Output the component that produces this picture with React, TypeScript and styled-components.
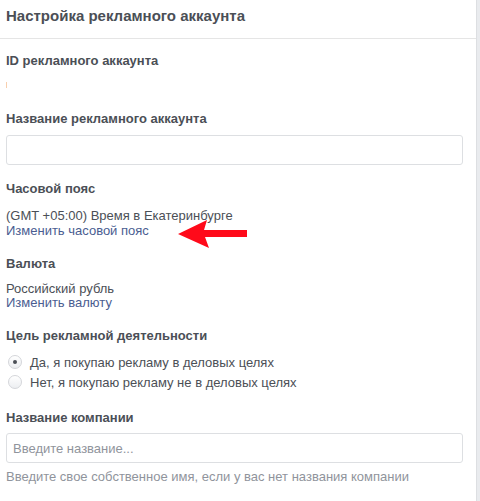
import React from "react";
import styled, { createGlobalStyle } from "styled-components";

const Global = createGlobalStyle`
  html, body { margin: 0; padding: 0; background: #e9ebee; }
  body { font-family: "Liberation Sans", Arial, sans-serif; }
`;

const Page = styled.div`
  display: flex;
  width: 480px;
  height: 501px;
  background: #e9ebee;
`;

const Panel = styled.div`
  width: 477px;
  height: 501px;
  background: #fff;
  border-right: 1px solid #dddfe2;
  box-sizing: border-box;
  display: flex;
  flex-direction: column;
  overflow: hidden;
`;

const Header = styled.div`
  height: 39px;
  box-sizing: border-box;
  border-bottom: 1px solid #e5e5e5;
  padding: 7px 6px 0;
  font-size: 15px;
  line-height: 17px;
  font-weight: bold;
  color: #4b4f56;
`;

const Body = styled.div`
  padding: 0 13px 0 6px;
  display: flex;
  flex-direction: column;
`;

const Section = styled.div<{ $top: number }>`
  margin-top: ${(p) => p.$top}px;
  display: flex;
  flex-direction: column;
`;

const Label = styled.div`
  font-size: 13px;
  font-weight: bold;
  color: #4b4f56;
  line-height: 16px;
`;

const Text = styled.div<{ $top?: number; $lh?: number }>`
  font-size: 13px;
  color: #4b4f56;
  line-height: ${(p) => p.$lh ?? 15}px;
  margin-top: ${(p) => p.$top ?? 0}px;
`;

const LinkRow = styled.div`
  position: relative;
  display: flex;
  align-items: center;
`;

const Link = styled.a<{ $lh?: number }>`
  font-size: 13px;
  color: #4a5d91;
  line-height: ${(p) => p.$lh ?? 15}px;
  text-decoration: none;
`;

const Input = styled.input<{ $top?: number }>`
  margin-top: ${(p) => p.$top ?? 8}px;
  height: 30px;
  box-sizing: border-box;
  border: 1px solid #dddfe2;
  border-radius: 3px;
  padding: 0 6px;
  font-family: "Liberation Sans", Arial, sans-serif;
  font-size: 13px;
  color: #1d2129;
  outline: none;
  &::placeholder { color: #90949c; }
`;

const Help = styled.div`
  font-size: 13px;
  color: #90949c;
  margin-top: 6px;
  line-height: 15px;
`;

const Mark = styled.div`
  width: 1px;
  height: 6px;
  background: #f8cfae;
  margin-top: 13px;
`;

const RadioRow = styled.label`
  display: flex;
  align-items: center;
  gap: 9px;
  height: 20px;
  font-size: 13px;
  color: #4b4f56;
  padding-left: 2px;
`;

const RadioCircle = styled.span<{ $checked?: boolean }>`
  width: 14px;
  height: 14px;
  margin-right: -1px;
  border-radius: 50%;
  border: 1px solid #d4d6da;
  background: linear-gradient(#fff, #eceef1);
  box-sizing: border-box;
  display: flex;
  align-items: center;
  justify-content: center;
  &::after {
    content: "";
    width: 4px;
    height: 4px;
    border-radius: 50%;
    background: ${(p) => (p.$checked ? "#4b4f56" : "transparent")};
  }
`;

const Arrow = styled.svg`
  position: absolute;
  left: 172px;
  top: -7px;
`;

export default function App() {
  return (
    <>
      <Global />
      <Page>
        <Panel>
          <Header>Настройка рекламного аккаунта</Header>
          <Body>
            <Section $top={14}>
              <Label>ID рекламного аккаунта</Label>
              <Mark />
            </Section>
            <Section $top={23}>
              <Label>Название рекламного аккаунта</Label>
              <Input />
            </Section>
            <Section $top={16}>
              <Label>Часовой пояс</Label>
              <Text $top={11}>(GMT +05:00) Время в Екатеринбурге</Text>
              <LinkRow>
                <Link>Изменить часовой пояс</Link>
                <Arrow width="72" height="36" viewBox="0 0 72 36">
                  <polygon points="0,18 29,4 26,14 69,14 69,21 27,21 31,32" fill="#ff0a1a" />
                </Arrow>
              </LinkRow>
            </Section>
            <Section $top={18}>
              <Label>Валюта</Label>
              <Text $top={10} $lh={14}>Российский рубль</Text>
              <Link $lh={14}>Изменить валюту</Link>
            </Section>
            <Section $top={18}>
              <Label>Цель рекламной деятельности</Label>
              <Section $top={8}>
                <RadioRow>
                  <RadioCircle $checked />
                  Да, я покупаю рекламу в деловых целях
                </RadioRow>
                <RadioRow>
                  <RadioCircle />
                  Нет, я покупаю рекламу не в деловых целях
                </RadioRow>
              </Section>
            </Section>
            <Section $top={18}>
              <Label>Название компании</Label>
              <Input $top={7} placeholder="Введите название..." />
              <Help>Введите свое собственное имя, если у вас нет названия компании</Help>
            </Section>
          </Body>
        </Panel>
      </Page>
    </>
  );
}
